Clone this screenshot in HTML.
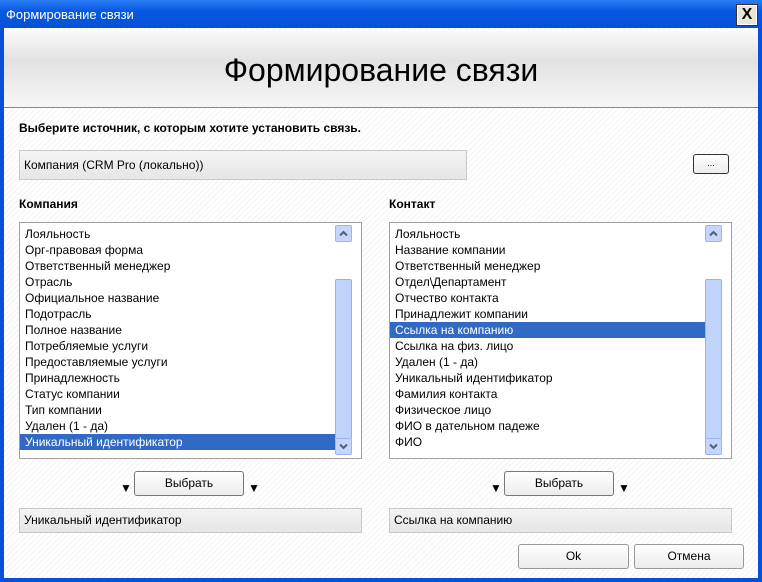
<!DOCTYPE html>
<html><head><meta charset="utf-8"><style>
*{margin:0;padding:0;box-sizing:border-box}
body{width:762px;height:582px;overflow:hidden;background:#0a4fd8;font-family:"Liberation Sans",sans-serif;font-size:12px;color:#000;position:relative}
.abs{position:absolute}
#title{left:0;top:0;width:762px;height:28px;background:linear-gradient(#2a7cf5,#0758e2 40%,#0552d6);}
#title span{position:absolute;left:6px;top:7px;color:#fff;font-size:13px}
#close{right:5px;top:5px;width:20px;height:20px;background:#e8e4d8;border:1px solid #fff;outline:1px solid #333;text-align:center;font-size:16px;line-height:18px;font-weight:bold}
#client{left:4px;top:28px;width:754px;height:550px;background:repeating-linear-gradient(135deg,#fff 0 3px,#f3f3f3 3px 4px)}
#hdr{left:4px;top:30px;width:754px;height:78px;background:linear-gradient(180deg,#fafafa,#e2e2e2 40%,#ececec 70%,#f6f6f6);border-bottom:1px solid #888}
#hdr div{position:absolute;left:0;width:100%;top:22px;text-align:center;font-size:32px}
.fld{background:linear-gradient(#f4f4f4,#e6e6e6);border:1px solid #c8c8c8;padding-left:4px;line-height:22px}
.btn{background:linear-gradient(#fff,#ececec);border:1px solid #777;border-radius:3px;text-align:center;font-size:12px}
.list{background:#fff;border:1px solid #a0a0a0}
.list div{height:16px;line-height:16px;padding-left:5px;white-space:nowrap}
.sel{background:#316ac5;color:#fff}
.sb{position:absolute;top:2px;width:17px;bottom:2px;background:#f5f4ee}
.sb .a{position:absolute;left:0;width:17px;height:17px;background:#c5d5fb;border:1px solid #9db4f0;border-radius:2px}
.sb .a svg{position:absolute;left:3px;top:4px}
.sb .t{position:absolute;left:0;width:17px;background:#c0d3fb;border:1px solid #98b0ee;border-radius:2px}
.tri{font-size:12px}
</style></head><body>
<div id="title" class="abs"><span>Формирование связи</span></div>
<div id="close" class="abs">X</div>
<div id="client" class="abs"></div>
<div id="hdr" class="abs"><div>Формирование связи</div></div>
<div class="abs" style="left:19px;top:121px;font-weight:bold;font-size:12px">Выберите источник, с которым хотите установить связь.</div>
<div class="abs fld" style="left:19px;top:150px;width:448px;height:30px;line-height:28px">Компания (CRM Pro (локально))</div>
<div class="abs btn" style="left:693px;top:154px;width:36px;height:20px;border-color:#333;font-size:9px;line-height:16px">...</div>
<div class="abs" style="left:19px;top:197px;font-weight:bold">Компания</div>
<div class="abs" style="left:389px;top:197px;font-weight:bold">Контакт</div>
<div class="abs list" style="left:19px;top:222px;width:343px;height:237px;padding-top:3px">
<div>Лояльность</div><div>Орг-правовая форма</div><div>Ответственный менеджер</div><div>Отрасль</div><div>Официальное название</div><div>Подотрасль</div><div>Полное название</div><div>Потребляемые услуги</div><div>Предоставляемые услуги</div><div>Принадлежность</div><div>Статус компании</div><div>Тип компании</div><div>Удален (1 - да)</div><div class="sel" style="width:315px">Уникальный идентификатор</div>
<div class="sb" style="left:315px"><div class="a" style="top:0"><svg width="9" height="7"><path d="M1 5.5L4.5 2 8 5.5" stroke="#4d6185" stroke-width="2" fill="none"/></svg></div><div class="t" style="top:54px;height:160px"></div><div class="a" style="top:213px"><svg width="9" height="7"><path d="M1 1.5L4.5 5 8 1.5" stroke="#4d6185" stroke-width="2" fill="none"/></svg></div></div>
</div>
<div class="abs list" style="left:389px;top:222px;width:343px;height:237px;padding-top:3px">
<div>Лояльность</div><div>Название компании</div><div>Ответственный менеджер</div><div>Отдел\Департамент</div><div>Отчество контакта</div><div>Принадлежит компании</div><div class="sel" style="width:315px">Ссылка на компанию</div><div>Ссылка на физ. лицо</div><div>Удален (1 - да)</div><div>Уникальный идентификатор</div><div>Фамилия контакта</div><div>Физическое лицо</div><div>ФИО в дательном падеже</div><div>ФИО</div>
<div class="sb" style="left:315px"><div class="a" style="top:0"><svg width="9" height="7"><path d="M1 5.5L4.5 2 8 5.5" stroke="#4d6185" stroke-width="2" fill="none"/></svg></div><div class="t" style="top:54px;height:160px"></div><div class="a" style="top:213px"><svg width="9" height="7"><path d="M1 1.5L4.5 5 8 1.5" stroke="#4d6185" stroke-width="2" fill="none"/></svg></div></div>
</div>
<div class="abs tri" style="left:120px;top:481px">▼</div>
<div class="abs btn" style="left:134px;top:471px;width:110px;height:25px;line-height:23px">Выбрать</div>
<div class="abs tri" style="left:248px;top:481px">▼</div>
<div class="abs tri" style="left:490px;top:481px">▼</div>
<div class="abs btn" style="left:504px;top:471px;width:110px;height:25px;line-height:23px">Выбрать</div>
<div class="abs tri" style="left:618px;top:481px">▼</div>
<div class="abs fld" style="left:19px;top:508px;width:343px;height:25px">Уникальный идентификатор</div>
<div class="abs fld" style="left:389px;top:508px;width:343px;height:25px">Ссылка на компанию</div>
<div class="abs btn" style="left:518px;top:544px;width:111px;height:25px;line-height:23px;border-color:#999">Ok</div>
<div class="abs btn" style="left:634px;top:544px;width:110px;height:25px;line-height:23px;border-color:#999">Отмена</div>
</body></html>
